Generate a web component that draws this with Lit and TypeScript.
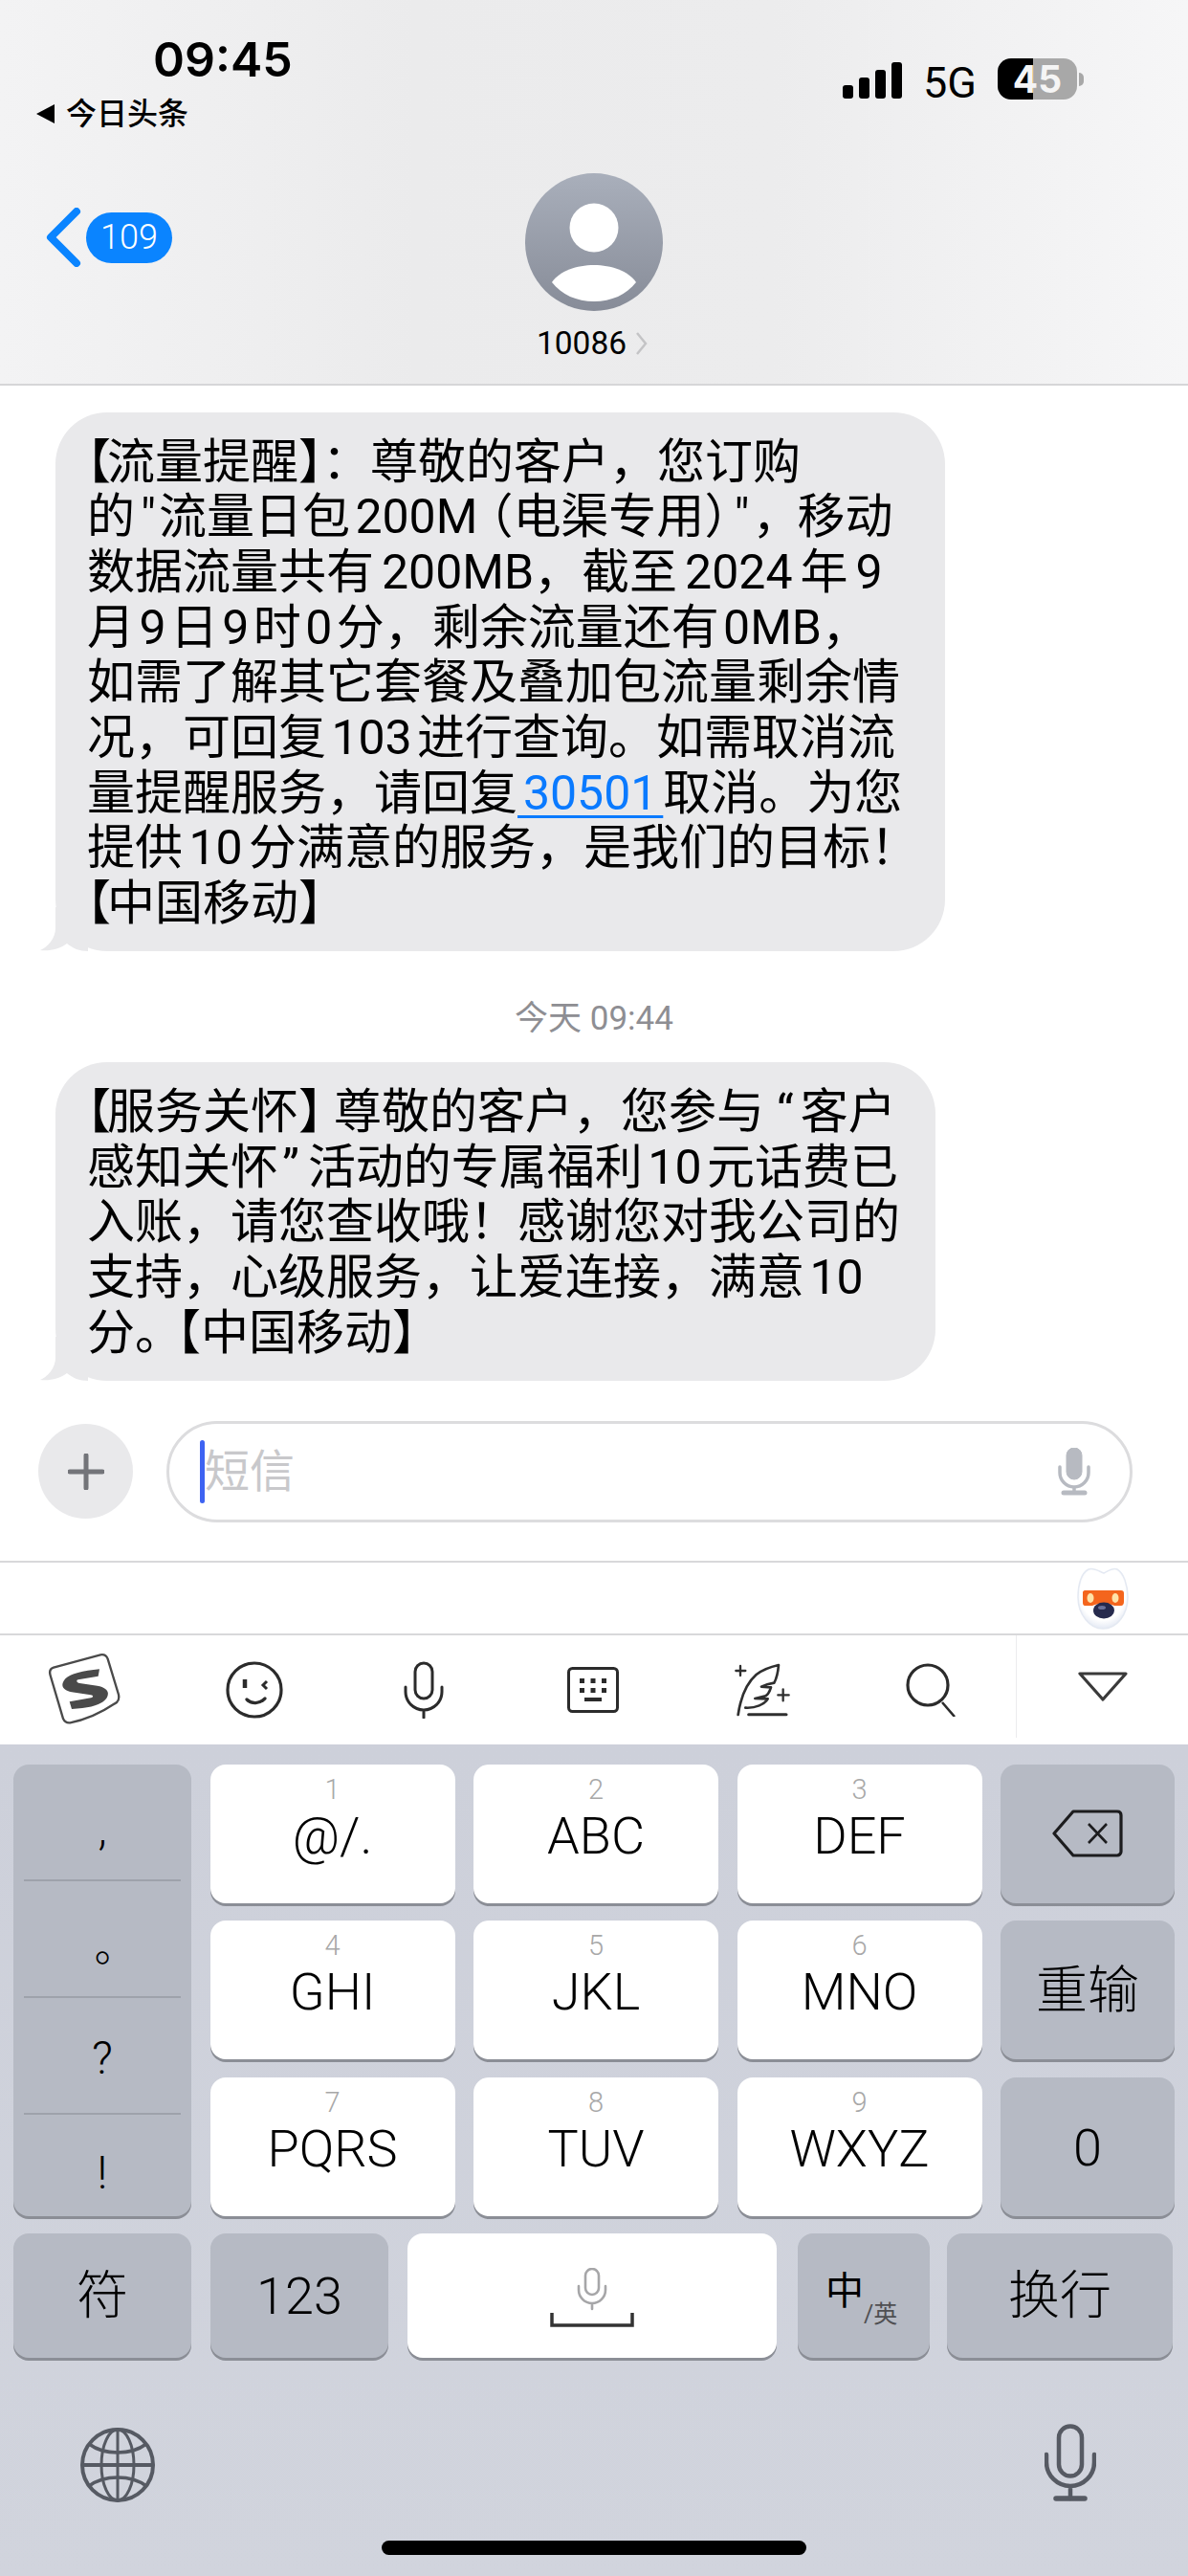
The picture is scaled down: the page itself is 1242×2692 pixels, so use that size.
import { LitElement, html, css } from "lit";
import { customElement } from "lit/decorators.js";

const mic = (w: number, h: number, c: string, sw: number) => html`<svg width=${w} height=${h} viewBox="0 0 44 60" fill="none" stroke=${c} stroke-width=${sw} stroke-linecap="round">
  <rect x="13" y="2" width="18" height="37" rx="9"/>
  <path d="M3 27v5a19 19 0 0 0 38 0v-5M22 51v8"/>
</svg>`;

const LETTERS = [
  ["1", "@/."], ["2", "ABC"], ["3", "DEF"],
  ["4", "GHI"], ["5", "JKL"], ["6", "MNO"],
  ["7", "PQRS"], ["8", "TUV"], ["9", "WXYZ"],
];

@customElement("app-root")
export class AppRoot extends LitElement {
  static styles = css`
    :host { display: block; width: 1242px; height: 2692px; overflow: hidden; background: #fff;
      font-family: Roboto, "Noto Sans CJK SC", sans-serif; color: #000; }
    svg { display: block; }
    .header { height: 403px; box-sizing: border-box; border-bottom: 2px solid #d6d6d8;
      background: linear-gradient(90deg, #f3f3f4 0%, #ebebec 35%, #ececed 65%, #f6f6f7 100%); }
    .status { height: 181px; box-sizing: border-box; padding-top: 36px; display: flex; }
    .time { font: 600 50px/52px Inter, sans-serif; margin-left: 160px; }
    .from { display: flex; align-items: center; margin: 15px 0 0 37px; gap: 12px; font-size: 32px; line-height: 32px; font-weight: 500; }
    .right { margin-left: auto; padding: 25px 109px 0 0; display: flex; align-items: flex-start; }
    .bars { display: flex; align-items: flex-end; gap: 6px; height: 38px; margin-top: 4px; }
    .bars i { display: block; width: 11px; background: #000; border-radius: 3px; }
    .b1 { height: 14px; } .b2 { height: 22px; } .b3 { height: 30px; } .b4 { height: 38px; }
    .net { font-size: 45px; line-height: 44px; font-weight: 400; margin: 4px 22px 0 22px; height: 44px; }
    .batt { width: 83px; height: 43px; border-radius: 14px; display: flex; align-items: center; justify-content: center;
      background: linear-gradient(90deg, #000 0 37px, #a8a8a8 37px); color: #f5f5f5; font: 700 39px/43px Inter, sans-serif; }
    .nub { width: 5px; height: 14px; margin: 15px 0 0 2px; background: #a8a8a8; border-radius: 0 7px 7px 0; }
    .nav { display: grid; grid-template-columns: 1fr auto 1fr; }
    .back { display: flex; align-items: center; margin: 36px 0 0 48px; gap: 5px; align-self: start; }
    .badge { width: 90px; height: 53px; border-radius: 27px; background: #0a84ff; color: #fff; font-size: 36px; font-weight: 300;
      line-height: 53px; text-align: center; }
    .contact { display: flex; flex-direction: column; align-items: center; }
    .name { display: flex; align-items: center; gap: 9px; font-size: 33.5px; line-height: 38px; margin: 15px 4px 0 0; }
    .msgs { padding: 28px 0 0 58px; }
    .bubble { position: relative; background: #e9e9eb; border-radius: 54px; box-sizing: border-box; padding: 23.5px 0 20.5px 33px;
      font-size: 50px; line-height: 57.7px; white-space: nowrap; word-spacing: -7px; text-spacing-trim: trim-start; }
    .w1 { width: 930px; } .w2 { width: 920px; }
    .tail { position: absolute; left: -16px; bottom: 0; }
    .link { color: #0a7aff; text-decoration: underline; text-decoration-thickness: 3px; text-underline-offset: 6px; word-spacing: -6.5px; }
    .stamp { text-align: center; margin: 49px 58px 23px 0; font-size: 35px; line-height: 44px; color: #8e8e93; }
    .ob { margin-right: -4px; }
    .cb { margin-right: -13px; }
    .cp { margin-right: -25px; }
    .lp { margin-left: -13px; }
    .qq { margin: 0 3px 0 6px; }
    .comma { margin-right: -3px; }
    .lq { margin: 0 7px 0 13px; }
    .rq { margin: 0 9px 0 4px; }
    .mid { margin-left: -6px; }
    .wide { word-spacing: -4.4px; }
    .tight { word-spacing: -8px; }
    .mid-gap { word-spacing: -6px; }
    .compose { display: flex; align-items: center; padding-left: 40px; gap: 35px; margin-top: 42px; height: 106px; }
    .plus { width: 99px; height: 99px; border-radius: 50%; background: #e9e9eb; display: flex; align-items: center; justify-content: center; }
    .field { width: 1010px; height: 106px; box-sizing: border-box; border: 3px solid #dcdcde; border-radius: 53px;
      display: flex; align-items: center; padding: 0 41px 0 32px; }
    .caret { width: 5px; height: 66px; border-radius: 3px; background: #3e63f2; flex: none; }
    .ph { font-size: 47px; line-height: 66px; color: #c8c8cb; flex: 1; }
    .mascot-row { margin-top: 40px; height: 74px; border-top: 2px solid #d8d8da; border-bottom: 2px solid #d8d8da;
      display: flex; align-items: center; justify-content: flex-end; padding-right: 61px; }
    .tools { height: 114px; display: grid; grid-template-columns: repeat(6, 177px) 1fr; }
    .tool { display: flex; align-items: center; justify-content: center; }
    .tool.last { border-left: 1px solid #ececee; height: 107px; }
    .kb { height: 871px; background: linear-gradient(#cdd0da, #d1d4dd); padding-top: 21px; box-sizing: border-box; }
    .grid { display: grid; grid-template-columns: 186px 256px 256px 256px 182px; column-gap: 19.5px; row-gap: 18.5px;
      grid-template-rows: repeat(3, 145px); padding-left: 14px; }
    .key { border-radius: 16px; background: #fff; box-shadow: 0 3px 0 #8b8e96; display: flex; flex-direction: column; align-items: center;
      font-weight: 300; }
    .key.g { background: #b6bac4; justify-content: center; }
    .n { font-size: 29px; line-height: 30px; color: #a8a8a8; margin-top: 11px; }
    .l { font-size: 54px; line-height: 62px; margin-top: 3px; }
    .syms { grid-row: 1 / span 3; justify-content: flex-start; align-items: stretch; padding: 0 11px; }
    .sym { text-align: center; height: 122px; box-sizing: border-box; border-bottom: 2px solid #9ea2ab; font-size: 48px; line-height: 126px; }
    .sym.s1 { line-height: 134px; }
    .sym.s2 { font-family: "Noto Sans CJK TC", sans-serif; font-size: 44px; line-height: 156px; }
    .sym.s4 { border: 0; height: 105px; line-height: 122px; }
    .sys { font-size: 54px; font-weight: 300; line-height: 62px; padding-top: 3px; }
    .bottom { display: grid; grid-template-columns: 186px 186px 386px 138px 236px; column-gap: 20px; grid-template-rows: 130px;
      padding-left: 14px; margin-top: 18px; }
    .key.zh { flex-direction: row; align-items: flex-start; margin-left: 2px; justify-content: flex-start; padding: 36px 0 0 29px; margin-right: -2px; }
    .zh b { font-size: 40px; line-height: 50px; font-weight: 400; }
    .zh span { font-size: 25px; line-height: 30px; margin-top: 34px; color: #4f4f52; font-weight: 400; }
    .space { justify-content: flex-start; padding-top: 36px; }
    .foot { display: flex; justify-content: space-between; padding: 0 96px 0 84px; margin-top: 69px; align-items: flex-end; height: 82px; }
    .home { width: 444px; height: 15px; border-radius: 8px; background: #000; margin: 40px auto 0; }
    .logo { margin-left: 3px; }
    .quill { margin-left: -3px; }
  `;

  render() {
    return html`
      <div class="header">
        <div class="status">
          <div>
            <div class="time">09:45</div>
            <div class="from">
              <svg width="20" height="22" viewBox="0 0 20 22"><path d="M20 1v20L1 11z" fill="#000"/></svg>
              <span>今日头条</span>
            </div>
          </div>
          <div class="right">
            <div class="bars"><i class="b1"></i><i class="b2"></i><i class="b3"></i><i class="b4"></i></div>
            <div class="net">5G</div>
            <div class="batt">45</div>
            <div class="nub"></div>
          </div>
        </div>
        <div class="nav">
          <div class="back">
            <svg width="37" height="62" viewBox="0 0 37 62" fill="none" stroke="#0a84ff" stroke-width="8" stroke-linecap="round" stroke-linejoin="round"><path d="M32 4 5 31l27 27"/></svg>
            <div class="badge">109</div>
          </div>
          <div class="contact">
            <svg width="144" height="144" viewBox="0 0 144 144">
              <defs><linearGradient id="av" x1="0" y1="0" x2="0" y2="1"><stop offset="0" stop-color="#a9afbb"/><stop offset="1" stop-color="#878c98"/></linearGradient></defs>
              <circle cx="72" cy="72" r="72" fill="url(#av)"/>
              <circle cx="72" cy="57" r="25.5" fill="#fff"/>
              <path d="M28 114C36 102 54 96 72 96s36 6 44 18c-10 13-26 20-44 20s-34-7-44-20z" fill="#fff"/>
            </svg>
            <div class="name"><span>10086</span>
              <svg width="13" height="24" viewBox="0 0 13 24" fill="none" stroke="#c4c4c6" stroke-width="2.5"><path d="m2 1 9 11-9 11"/></svg>
            </div>
          </div>
        </div>
      </div>

      <div class="msgs">
        <div class="bubble w1">
          ${this.tail()}
          <span class="ob">【</span>流量提醒】：尊敬的客户，您订购<br>
          的<span class="qq">"</span>流量日包 200M<span class="lp">（</span>电渠专用<span class="cp">）</span><span class="qq">"</span><span class="comma">，</span>移动<br>
          <span class="wide">数据流量共有 200MB，截至 2024 年 9</span><br>
          <span class="tight">月 9 日 9 时 0 分，剩余流量还有 0MB，</span><br>
          如需了解其它套餐及叠加包流量剩余情<br>
          况，可回复 103 进行查询。如需取消流<br>
          量提醒服务，请回复<span class="link">&nbsp;30501&nbsp;</span>取消。为您<br>
          <span class="mid-gap">提供 10 分满意的服务，是我们的目标！</span><br>
          <span class="ob">【</span>中国移动】
        </div>
        <div class="stamp">今天 09:44</div>
        <div class="bubble w2">
          ${this.tail()}
          <span class="ob">【</span>服务关怀<span class="cb">】</span>尊敬的客户，您参与<span class="lq">“</span>客户<br>
          感知关怀<span class="rq">”</span>活动的专属福利 10 元话费已<br>
          入账，请您查收哦！感谢您对我公司的<br>
          支持，心级服务，让爱连接，满意 10<br>
          分。<span class="mid">【</span>中国移动】
        </div>
      </div>

      <div class="compose">
        <div class="plus">
          <svg width="38" height="38" viewBox="0 0 38 38" stroke="#737479" stroke-width="5" stroke-linecap="round"><path d="M19 2v34M2 19h34"/></svg>
        </div>
        <div class="field">
          <div class="caret"></div>
          <div class="ph">短信</div>
          <svg width="34" height="50" viewBox="0 0 34 50" fill="none" stroke="#b7bac1">
            <rect x="9" y="0" width="16" height="33" rx="8" fill="#b7bac1"/>
            <path d="M2 20v6a15 15 0 0 0 30 0v-6M17 41v6" stroke-width="3.5" stroke-linecap="round"/>
            <path d="M6 47h22" stroke-width="5" stroke-linecap="round"/>
          </svg>
        </div>
      </div>

      <div class="mascot-row">
        <svg width="56" height="66" viewBox="0 0 56 66">
          <defs>
            <radialGradient id="mh" cx="0.5" cy="0.4" r="0.65"><stop offset="0.7" stop-color="#fff"/><stop offset="1" stop-color="#dbe2f0"/></radialGradient>
          </defs>
          <path d="M29 7C24 5 18 1 13 3 5 7 2 20 2 32c0 18 12 33 26 33 15 0 26-15 26-33 0-12-4-25-11-29-4-2-10 2-14 4z" fill="url(#mh)" stroke="#e4e9f2" stroke-width="1.500"/>
          <path d="M7 27c0-1 1-2 2-2h38c2 0 3 1 3 3v9c0 2-1 4-3 4H40c-7-3-16-3-23 0H9c-1 0-2-1-2-3z" fill="#f4651d"/>
          <ellipse cx="15" cy="33" rx="3.500" ry="5" fill="#ffe3a8"/><ellipse cx="41" cy="33" rx="3.500" ry="5" fill="#ffe3a8"/>
          <ellipse cx="29" cy="46" rx="11" ry="8.500" fill="#262a4d"/>
          <ellipse cx="27" cy="43" rx="4" ry="2" fill="#6a7199"/>
        </svg>
      </div>

      <div class="tools">
        <div class="tool">
          <svg class="logo" width="100" height="90" viewBox="0 0 300 270">
            <path d="M48 65 195 25q17-3 23 13l34 112q4 20-12 28-70 47-140 60-15 2-22-13L38 90q-6-20 10-25z" fill="none" stroke="#4a4a4a" stroke-width="7"/>
            <path d="M192 70 188 92 125 103c-7 2-5 9 5 11l55 8c30 6 40 18 30 38-12 20-50 32-110 35l-7-23 67-12c10-2 7-8 0-9l-60-9C75 136 68 120 85 100c15-15 55-25 107-30z" fill="#4a4a4a"/>
          </svg>
        </div>
        <div class="tool">
          <svg width="60" height="60" viewBox="0 0 60 60" fill="none" stroke="#2b2b2b" stroke-width="3.2">
            <circle cx="30" cy="30" r="28"/>
            <path d="M20 19v9" stroke-width="4.5"/>
            <path d="M43 21l-4 4 4 4" stroke-width="3"/>
            <path d="M22 40c5 5 13 5 19-1" stroke-linecap="round"/>
          </svg>
        </div>
        <div class="tool">${mic(44, 60, "#2b2b2b", 3)}</div>
        <div class="tool">
          <svg width="54" height="48" viewBox="0 0 54 48">
            <rect x="1.5" y="1.5" width="51" height="45" rx="4" fill="none" stroke="#2b2b2b" stroke-width="3"/>
            <path d="M13 12h5v5h-5zM24.500 12h5v5h-5zM36 12h5v5h-5zM13 22h5v5h-5zM24.500 22h5v5h-5zM36 22h5v5h-5zM18 32h18v4H18z" fill="#2b2b2b"/>
          </svg>
        </div>
        <div class="tool">
          <svg class="quill" width="90" height="80" viewBox="0 0 270 240" fill="none" stroke="#2f2f2f" stroke-width="8" stroke-linecap="round" stroke-linejoin="round">
            <path d="M65 198C72 150 90 100 122 72c18-14 43-24 70-30-2 23-7 43-14 56-13 2-28 6-40 12l30 2c-5 16-13 26-20 28l-30 7 40 1c-10 17-38 30-70 28"/>
            <path d="M98 197h118" stroke-width="9"/>
            <path d="M72 45v30M58 60h30M206 118v36M190 136h34" stroke-width="7"/>
          </svg>
        </div>
        <div class="tool">
          <svg width="54" height="56" viewBox="0 0 54 56" fill="none" stroke="#2b2b2b" stroke-width="3.200">
            <circle cx="23" cy="23" r="21"/>
            <path d="m38 41 13 15" stroke-width="2.600"/>
          </svg>
        </div>
        <div class="tool last">
          <svg width="52" height="32" viewBox="0 0 52 32" fill="none" stroke="#3a3a3a" stroke-width="3.200" stroke-linejoin="round"><path d="M2 3h48L26 30z"/></svg>
        </div>
      </div>

      <div class="kb">
        <div class="grid">
          <div class="key g syms">
            <div class="sym s1">,</div>
            <div class="sym s2">。</div>
            <div class="sym">?</div>
            <div class="sym s4">!</div>
          </div>
          ${LETTERS.slice(0, 3).map((k) => this.letter(k))}
          <div class="key g">
            <svg width="74" height="50" viewBox="0 0 74 50" fill="none" stroke="#1c1c1e" stroke-width="3.200" stroke-linejoin="round"><path d="M22 2h46c3 0 4 2 4 4v38c0 2-2 4-4 4H22L2 25z"/><path d="m38 15 19 20M57 15 38 35" stroke-width="2.600"/></svg>
          </div>
          ${LETTERS.slice(3, 6).map((k) => this.letter(k))}
          <div class="key g"><span class="sys">重输</span></div>
          ${LETTERS.slice(6, 9).map((k) => this.letter(k))}
          <div class="key g"><span class="sys">0</span></div>
        </div>
        <div class="bottom">
          <div class="key g"><span class="sys">符</span></div>
          <div class="key g"><span class="sys">123</span></div>
          <div class="key space">
            <svg width="88" height="62" viewBox="0 0 88 62" fill="none">
              <g stroke="#a6a6a8" stroke-width="2.600" stroke-linecap="round">
                <rect x="37" y="1" width="14" height="27" rx="7"/>
                <path d="M30 19v4a14 14 0 0 0 28 0v-4M44 37v6"/>
              </g>
              <path d="M2 47v13h84V47" stroke="#333" stroke-width="3.500"/>
            </svg>
          </div>
          <div class="key g zh"><b>中</b><span>/英</span></div>
          <div class="key g"><span class="sys">换行</span></div>
        </div>
        <div class="foot">
          <svg width="78" height="78" viewBox="0 0 78 78" fill="none" stroke="#565a63" stroke-width="3">
            <circle cx="39" cy="39" r="37" stroke-width="4"/>
            <ellipse cx="39" cy="39" rx="17" ry="37"/>
            <path d="M39 2v74"/>
            <path d="M2 39h74" stroke-width="4"/>
            <path d="M9 17c16 12 44 12 60 0M9 61c16-12 44-12 60 0" stroke-width="3.500"/>
          </svg>
          <svg width="54" height="82" viewBox="0 0 54 82" fill="none" stroke="#565a63" stroke-width="4.500" stroke-linecap="round">
            <rect x="15" y="2.500" width="24" height="52" rx="12"/>
            <path d="M2 32v8a25 25 0 0 0 50 0v-8M27 65v13"/>
            <path d="M12 78h30" stroke-width="5.500"/>
          </svg>
        </div>
        <div class="home"></div>
      </div>
    `;
  }

  private tail() {
    return html`<svg class="tail" width="50" height="46" viewBox="0 0 50 46"><path d="M16 0v22C16 32 8 42 0 45c10 1 20-1 28-7 6 5 13 8 22 8V0z" fill="#e9e9eb"/></svg>`;
  }

  private letter(k: string[]) {
    return html`<div class="key"><div class="n">${k[0]}</div><div class="l">${k[1]}</div></div>`;
  }
}
